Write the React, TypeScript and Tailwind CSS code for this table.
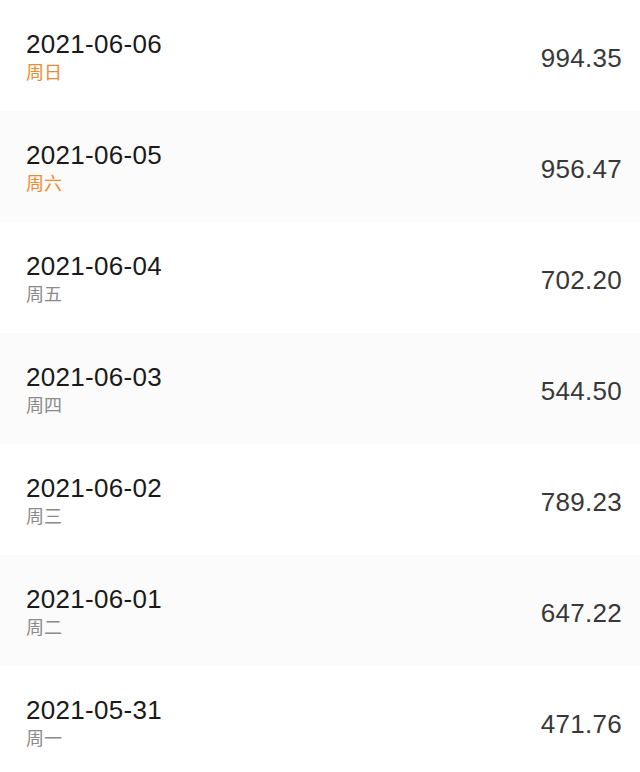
const rows = [
  { date: "2021-06-06", day: "周日", value: "994.35", weekend: true },
  { date: "2021-06-05", day: "周六", value: "956.47", weekend: true },
  { date: "2021-06-04", day: "周五", value: "702.20", weekend: false },
  { date: "2021-06-03", day: "周四", value: "544.50", weekend: false },
  { date: "2021-06-02", day: "周三", value: "789.23", weekend: false },
  { date: "2021-06-01", day: "周二", value: "647.22", weekend: false },
  { date: "2021-05-31", day: "周一", value: "471.76", weekend: false },
];

export default function App() {
  return (
    <div className="h-[772px] w-[640px] overflow-hidden bg-white font-['Liberation_Sans','Noto_Sans_CJK_SC',sans-serif]">
      {rows.map((row, i) => (
        <div
          key={row.date}
          className={`flex h-[111px] items-center justify-between pl-[26px] pr-[18px] ${
            i % 2 === 1 ? "bg-[#fbfbfb]" : "bg-white"
          }`}
        >
          <div className="flex flex-col">
            <span className="text-[26px] leading-[30px] tracking-[0.3px] text-[#1a1a1a]">
              {row.date}
            </span>
            <span
              className={`mt-[1px] text-[18px] leading-[22px] font-['Noto_Sans_CJK_SC',sans-serif] ${
                row.weekend ? "text-[#ef8a2c]" : "text-[#8a8a8a]"
              }`}
            >
              {row.day}
            </span>
          </div>
          <span className="mt-[4px] text-[26px] leading-[30px] tracking-[0.3px] text-[#383838]">
            {row.value}
          </span>
        </div>
      ))}
    </div>
  );
}
